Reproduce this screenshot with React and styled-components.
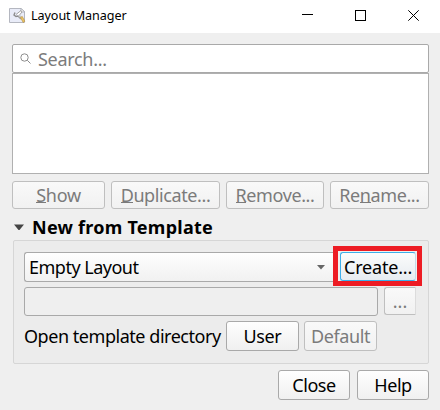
import React from "react";
import styled, { createGlobalStyle } from "styled-components";

const Global = createGlobalStyle`
  * { box-sizing: border-box; }
  body { margin: 0; background: #efefef; font-family: "Noto Sans", "Open Sans", sans-serif; color: #000; }
`;

const Window = styled.main`
  width: 440px;
  height: 410px;
  background: #efefef;
  display: flex;
  flex-direction: column;
  overflow: hidden;
`;

const TitleBar = styled.header`
  height: 33px;
  flex: none;
  display: flex;
  align-items: center;
  background: #fff;
  padding: 0 21px 2px 9px;
`;

const Title = styled.h1`
  margin: 0 auto 0 5px;
  font-size: 12.6px;
  font-weight: 400;
  line-height: 18px;
  letter-spacing: -0.08px;
  white-space: nowrap;
`;

const WindowControls = styled.div`
  display: flex;
  gap: 42px;
`;

const Body = styled.section`
  padding: 11px 11px 0 12px;
  display: flex;
  flex-direction: column;
`;

const SearchField = styled.div`
  height: 29px;
  display: flex;
  align-items: center;
  gap: 7px;
  padding-left: 7px;
  background: #fff;
  border: 1px solid #a9a9a9;
  border-radius: 2px;
  color: #7c7c7c;
`;

const LayoutList = styled.div`
  height: 101px;
  background: #fff;
  border: 1px solid #b0b0b0;
`;

const Label = styled.span`
  font-size: 18px;
  font-weight: ${(p) => p.$weight || 400};
  line-height: 24px;
  letter-spacing: ${(p) => p.$track || 0}px;
  white-space: nowrap;
`;

const Key = styled.span`
  box-shadow: 0 1px 0 currentColor;
  display: inline-block;
  height: 17px;
  line-height: 20px;
`;

const Button = styled.button`
  flex: none;
  width: ${(p) => p.$w}px;
  height: ${(p) => p.$h || 30}px;
  padding: 0;
  display: flex;
  align-items: center;
  justify-content: center;
  font-family: inherit;
  color: ${(p) => (p.disabled ? "#7b7b7b" : "#000")};
  background: ${(p) => (p.disabled ? "linear-gradient(#f9f9f9, #f1f1f1)" : "linear-gradient(#fefefe, #f0f0f0)")};
  border: 1px solid ${(p) => (p.disabled ? "#bfbfbf" : "#a9a9a9")};
  border-radius: 3px;
`;

const ActionRow = styled.div`
  display: flex;
  justify-content: space-between;
  margin-top: 7px;
`;

const SectionHeading = styled.h2`
  margin: 5px 0 0;
  height: 25px;
  padding-left: 2px;
  display: flex;
  align-items: center;
  gap: 8px;
`;

const TemplatePanel = styled.div`
  margin: 1px 0 0 1px;
  height: 124px;
  padding: 5px 6px 0 10px;
  border: 1px solid #d6d6d6;
  border-radius: 2px;
  background: #ececec;
`;

const ChoiceRow = styled.div`
  display: flex;
  height: 41px;
`;

const Combo = styled.div`
  flex: 1;
  height: 30px;
  margin-top: 6px;
  display: flex;
  align-items: center;
  justify-content: space-between;
  padding: 0 8px 0 4px;
  background: linear-gradient(#fefefe, #f1f1f1);
  border: 1px solid #a9a9a9;
  border-right: 0;
  border-radius: 3px 0 0 3px;
`;

const Highlight = styled.div`
  width: 89px;
  height: 40px;
  border: 5px solid #ed1c24;
  padding: 1px 1px 0 2px;
  background: #efefef;
`;

const CreateButton = styled(Button)`
  width: 76px;
  height: 29px;
  border-color: #3daee9;
  border-right-color: #c5dbe9;
  background: linear-gradient(#fbfcfc, #e7ecf0);
`;

const PathRow = styled.div`
  display: flex;
  gap: 6px;
`;

const PathField = styled.div`
  width: 354px;
  height: 29px;
  background: #efefef;
  border: 1px solid #a9a9a9;
  border-radius: 3px;
`;

const BrowseButton = styled(Button)`
  border-right-color: #dcdcdc;
  border-radius: 3px 0 0 3px;
`;

const DirectoryRow = styled.div`
  display: flex;
  align-items: center;
  margin-top: 5px;
`;

const DirectoryLabel = styled(Label)`
  width: 202px;
`;

const Footer = styled.footer`
  display: flex;
  justify-content: flex-end;
  gap: 7px;
  margin-top: 6px;
`;

const DefaultSlot = styled.div`
  margin-left: 5px;
`;

function LayoutIcon() {
  return (
    <svg width="17" height="17" viewBox="0 0 17 17" fill="none">
      <path d="M.5 1.5h11.5l3.5 3v11H.5z" fill="#e9ecf8" stroke="#b4b7c0" />
      <path d="M12 1.5l3.5 3.5H12z" fill="#fff" stroke="#a2a5ad" strokeWidth=".7" />
      <path d="M6 5.5L5 8l2 1.5 2-.5 3 3" stroke="#8c8c8c" strokeWidth="1.4" />
      <path d="M7 7.5l5-4 1 1.5-2.5 3" fill="#fff" stroke="#999" strokeWidth=".9" />
      <path d="M10 8.5l2.5 2.5" stroke="#c6c6c6" strokeWidth="2" />
      <path d="M11.5 10.5l1.8-1 2.5 4.8-1.6 1.2z" fill="#edc766" stroke="#b58c38" strokeWidth=".6" />
    </svg>
  );
}

function SearchIcon() {
  return (
    <svg width="11" height="11" viewBox="0 0 11 11" fill="none" stroke="#8d8d8d">
      <circle cx="4.5" cy="4.5" r="3.7" />
      <path d="M7.3 7.3l3.2 3.2" />
    </svg>
  );
}

export default function App() {
  return (
    <>
      <Global />
      <Window>
        <TitleBar>
          <LayoutIcon />
          <Title>Layout Manager</Title>
          <WindowControls>
            <svg width="11" height="11"><path d="M0 4.5h11" stroke="#000" /></svg>
            <svg width="11" height="11"><rect x=".5" y=".5" width="10" height="10" fill="none" stroke="#000" /></svg>
            <svg width="11" height="11"><path d="M.3.3l10.4 10.4M10.7.3L.3 10.7" stroke="#000" /></svg>
          </WindowControls>
        </TitleBar>
        <Body>
          <SearchField>
            <SearchIcon />
            <Label $track={-0.3}>Search...</Label>
          </SearchField>
          <LayoutList />
          <ActionRow>
            <Button disabled $w={93} $h={28}><Label $track={-0.3}><Key>S</Key>how</Label></Button>
            <Button disabled $w={109} $h={28}><Label $track={-0.4}><Key>D</Key>uplicate...</Label></Button>
            <Button disabled $w={98} $h={28}><Label $track={-0.4}><Key>R</Key>emove...</Label></Button>
            <Button disabled $w={99} $h={28}><Label $track={-0.4}>Re<Key>n</Key>ame...</Label></Button>
          </ActionRow>
          <SectionHeading>
            <svg width="10" height="6"><path d="M0 .5h10L5.5 6h-1z" fill="#444" /></svg>
            <Label $weight={700} $track={0.25}>New from Template</Label>
          </SectionHeading>
          <TemplatePanel>
            <ChoiceRow>
              <Combo>
                <Label $track={-0.5}>Empty Layout</Label>
                <svg width="8" height="5"><path d="M0 0h8L4 4.5z" fill="#666" /></svg>
              </Combo>
              <Highlight>
                <CreateButton><Label $track={-0.2}>Create...</Label></CreateButton>
              </Highlight>
            </ChoiceRow>
            <PathRow>
              <PathField />
              <BrowseButton disabled $w={32} $h={28}><Label>...</Label></BrowseButton>
            </PathRow>
            <DirectoryRow>
              <DirectoryLabel $track={-0.46}>Open template directory</DirectoryLabel>
              <Button $w={73}><Label $track={-0.4}>User</Label></Button>
              <DefaultSlot><Button disabled $w={73}><Label $track={-0.4}>Default</Label></Button></DefaultSlot>
            </DirectoryRow>
          </TemplatePanel>
          <Footer>
            <Button $w={72}><Label $track={-0.4}>Close</Label></Button>
            <Button $w={72}><Label $track={-0.4}>Help</Label></Button>
          </Footer>
        </Body>
      </Window>
    </>
  );
}
